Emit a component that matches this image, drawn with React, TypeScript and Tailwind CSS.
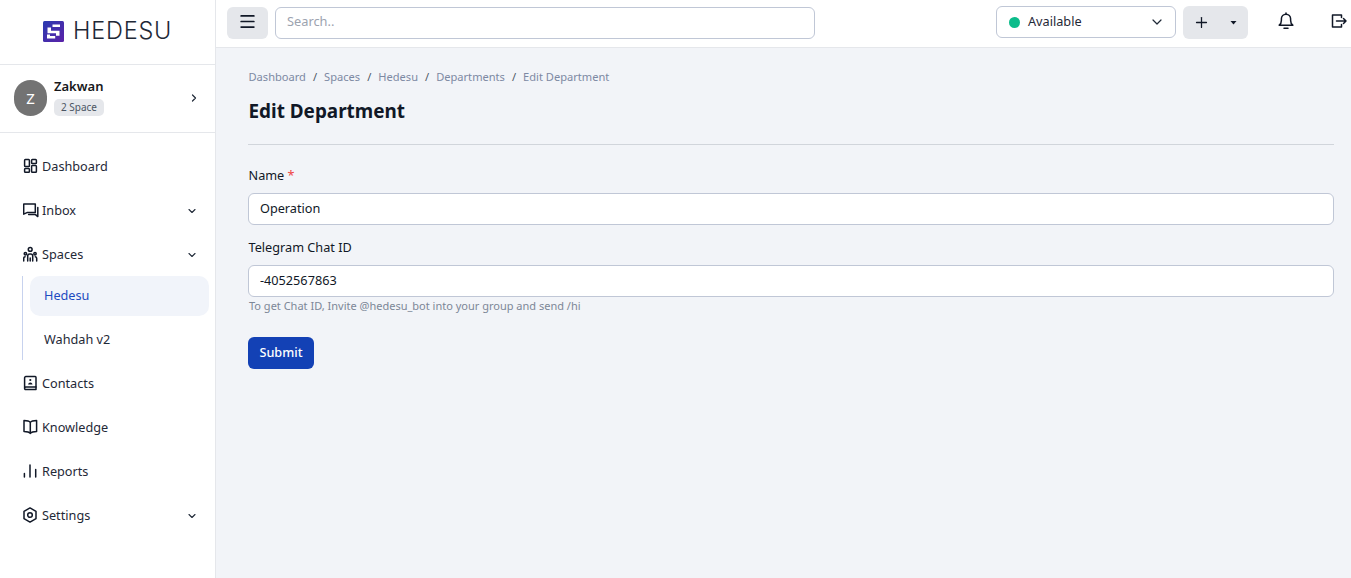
import { ChevronDown, ChevronRight, Plus, Menu } from "lucide-react";
import { ReactNode } from "react";

function Icon({ children }: { children: ReactNode }) {
  return (
    <svg width="16" height="16" viewBox="0 0 16 16" fill="none" stroke="#111827" strokeWidth="1.5" strokeLinecap="round" strokeLinejoin="round" className="mb-[2px] shrink-0">
      {children}
    </svg>
  );
}

function NavItem({ icon, label, caret }: { icon: ReactNode; label: string; caret?: boolean }) {
  return (
    <div className="flex h-11 items-center gap-[3px] pr-[17.5px] pl-[23px] text-[12.7px] text-[#1f2937]">
      {icon}
      <span className="flex-1">{label}</span>
      {caret && <ChevronDown size={12} strokeWidth={2.2} className="text-[#1f2937]" />}
    </div>
  );
}

function Crumb({ label, last }: { label: string; last?: boolean }) {
  return (
    <>
      <span>{label}</span>
      {!last && <span className="text-[#4b5563]">/</span>}
    </>
  );
}

export default function App() {
  return (
    <div className="flex h-[578px] w-[1351px] overflow-hidden bg-[#f2f4f8] font-['Noto_Sans',sans-serif] text-[#111827]">
      <aside className="flex w-[216px] shrink-0 flex-col border-r border-[#e5e7eb] bg-white">
        <div className="flex h-[65px] items-center gap-[9px] border-b border-[#e5e7eb] pb-[2px] pl-[43px]">
          <svg width="21" height="21" viewBox="0 0 21 21">
            <defs>
              <linearGradient id="logo" x1="0" y1="0" x2="1" y2="1">
                <stop offset="0" stopColor="#2a3bb0" />
                <stop offset="1" stopColor="#5b21a8" />
              </linearGradient>
            </defs>
            <rect width="21" height="21" rx="1.5" fill="url(#logo)" />
            <path d="M9.5 3.5H17v2.6H9.5zM4.5 6.5H8v3.2h8.5v5H13v-2.4H4.5zM4 13.6h3v1.4h5.2v2.5H4z" fill="#fff" />
          </svg>
          <span className="font-['Inter',sans-serif] text-[23.5px] leading-none font-light tracking-[0.8px] text-[#1f2937]">HEDESU</span>
        </div>
        <div className="flex h-[68px] items-center border-b border-[#e5e7eb] pr-[15px] pb-px pl-[14px]">
          <div className="flex h-9 w-[33px] items-center justify-center rounded-full bg-[#737373] text-[15px] text-white">Z</div>
          <div className="mb-[3px] ml-[7px] flex flex-1 flex-col items-start">
            <span className="text-[13px] leading-[18px] font-semibold text-[#18181b]">Zakwan</span>
            <span className="mt-[4px] rounded-[5px] bg-[#e5e7eb] px-[7px] text-[10px] leading-[17px] text-[#4b5563]">2 Space</span>
          </div>
          <ChevronRight size={12} strokeWidth={2.4} className="mb-px text-[#1f2937]" />
        </div>
        <nav className="flex flex-col pt-[12px]">
          <NavItem
            label="Dashboard"
            icon={
              <Icon>
                <rect x="1.6" y="1.6" width="4.8" height="7" rx="0.8" />
                <rect x="8.6" y="1.6" width="4.8" height="4" rx="0.8" />
                <rect x="1.6" y="10.6" width="4.8" height="3.6" rx="0.8" />
                <rect x="8.6" y="7.6" width="4.8" height="6.6" rx="0.8" />
              </Icon>
            }
          />
          <NavItem
            label="Inbox"
            caret
            icon={
              <Icon>
                <path d="M.7 2h11.6v8.6H4L.7 12.2z" />
                <path d="M14.8 5.6v9l-2.3-2H5.6" />
              </Icon>
            }
          />
          <NavItem
            label="Spaces"
            caret
            icon={
              <Icon>
                <circle cx="7.2" cy="3.4" r="1.9" />
                <circle cx="2.4" cy="7.8" r="1.2" />
                <circle cx="12" cy="7.8" r="1.2" />
                <path d="M4.7 15v-5a2 2 0 0 1 2-2h1a2 2 0 0 1 2 2v5" />
                <path d="M.7 15v-2.6a1.6 1.6 0 0 1 1.4-1.6M13.7 15v-2.6a1.6 1.6 0 0 0-1.4-1.6M7.2 12v3" />
              </Icon>
            }
          />
          <div className="mb-[2px] -mt-px ml-[22px] flex flex-col border-l border-[#c7d2ee] pr-[6px] pl-[7px]">
            <div className="flex h-10 items-center rounded-[10px] bg-[#f1f4fa] pl-[14px] text-[12.7px] text-[#1e4bc0]">Hedesu</div>
            <div className="mt-1 flex h-10 items-center pl-[14px] text-[12.7px] text-[#1f2937]">Wahdah v2</div>
          </div>
          <NavItem
            label="Contacts"
            icon={
              <Icon>
                <path d="M2.8 1.6h9.4a.8.8 0 0 1 .8.8v9.6H2.8a1.3 1.3 0 0 0-1.2 1.3V2.8a1.2 1.2 0 0 1 1.2-1.2z" />
                <path d="M1.6 13.4a1 1 0 0 0 1 1H13V12" />
                <circle cx="7.3" cy="5" r="1.1" fill="#111827" stroke="none" />
                <path d="M5.1 9.4c.2-1.3 1-2 2.2-2s2 .7 2.2 2z" fill="#111827" stroke="none" />
              </Icon>
            }
          />
          <NavItem
            label="Knowledge"
            icon={
              <Icon>
                <path d="M7.3 3.4C6.3 2.2 4.8 1.6 1 1.6v10.8c3.6 0 5.3.6 6.3 2 1-1.4 2.7-2 6.3-2V1.6C9.8 1.6 8.3 2.2 7.3 3.4zM7.3 3.4v11" />
              </Icon>
            }
          />
          <NavItem
            label="Reports"
            icon={
              <Icon>
                <path d="M1.4 14v-3.4M7 14V2M12.7 14V6.4" />
              </Icon>
            }
          />
          <NavItem
            label="Settings"
            caret
            icon={
              <Icon>
                <path d="M7 .9l6 3.5v7.2l-6 3.5-6-3.5V4.4z" />
                <circle cx="7" cy="8" r="2.3" />
              </Icon>
            }
          />
        </nav>
      </aside>

      <div className="flex min-w-0 flex-1 flex-col">
        <header className="flex h-[48px] items-center border-b border-[#e5e7eb] bg-white pb-px pl-[11px]">
          <button className="flex h-[32px] w-[41px] items-center justify-center rounded-md bg-[#e5e7eb] text-[#111827]">
            <Menu size={19} strokeWidth={2.2} className="mb-[3px]" />
          </button>
          <div className="ml-[7px] flex h-[32px] w-[540px] items-center rounded-md border border-[#c0c7d6] bg-white pb-[2px] pl-[11px] text-[12.8px] text-[#9ca3af]">Search..</div>
          <div className="mb-[2px] ml-[181px] flex h-[32px] w-[180px] items-center rounded-md border border-[#c0c7d6] bg-white pr-[10px] pl-[12px] text-[12.7px] text-[#1f2937]">
            <span className="h-[11px] w-[11px] rounded-full bg-[#0cbc8b]" />
            <span className="ml-[8px] flex-1">Available</span>
            <ChevronDown size={16} strokeWidth={1.8} className="text-[#1f2937]" />
          </div>
          <div className="mb-px ml-[7px] flex h-[33px] w-[65px] items-center rounded-md bg-[#e5e7eb] pl-[10px] text-[#111827]">
            <Plus size={17} strokeWidth={1.8} />
            <svg width="7" height="4" viewBox="0 0 7 4" className="ml-[20px]">
              <path d="M0.5 0h6L3.5 3.6z" fill="#111827" />
            </svg>
          </div>
          <svg width="18" height="18" viewBox="0 0 18 18" fill="none" stroke="#111827" strokeWidth="1.5" strokeLinecap="round" strokeLinejoin="round" className="mb-[4px] ml-[29px] shrink-0">
            <path d="M2.2 13.2c1.4-1 2.2-2.4 2.2-5V6.8a4.6 4.6 0 0 1 9.2 0v1.4c0 2.6.8 4 2.2 5z" />
            <path d="M7 16.2h4M9 1v1" />
          </svg>
          <svg width="16" height="16" viewBox="0 0 16 16" fill="none" stroke="#111827" strokeWidth="1.5" strokeLinecap="round" strokeLinejoin="round" className="mb-[4px] ml-[36px] shrink-0">
            <path d="M10.5 4.5V2h-9v12h9v-2.5M5.5 8H15M12.5 5.5L15 8l-2.5 2.5" />
          </svg>
        </header>

        <main className="flex-1 pt-[21px] pr-[17px] pl-[32px]">
          <div className="ml-[0.5px] flex items-center gap-[7px] text-[11.1px] leading-[16px] text-[#7d89a3]">
            <Crumb label="Dashboard" />
            <Crumb label="Spaces" />
            <Crumb label="Hedesu" />
            <Crumb label="Departments" />
            <Crumb label="Edit Department" last />
          </div>
          <h1 className="mt-[12px] ml-[0.5px] text-[18.9px] leading-[28px] font-bold text-[#111827]">Edit Department</h1>
          <div className="mt-[19px] border-t border-[#d1d5db]" />
          <label className="mt-[21px] ml-[0.5px] block text-[12.7px] leading-[18px] text-[#111827]">
            Name <span className="text-[#ef4444]">*</span>
          </label>
          <input readOnly value="Operation" className="mt-[9px] block h-[32px] w-full rounded-md border border-[#c0c7d6] bg-white px-[11px] pb-[3px] text-[12.7px] text-[#111827] outline-none" />
          <label className="mt-[13px] ml-[0.5px] block text-[12.7px] leading-[18px] text-[#111827]">Telegram Chat ID</label>
          <input readOnly value="-4052567863" className="mt-[9px] block h-[32px] w-full rounded-md border border-[#c0c7d6] bg-white px-[11px] pb-[2px] text-[12.7px] text-[#111827] outline-none" />
          <p className="mt-px ml-px text-[11px] leading-[16px] text-[#7d8797]">To get Chat ID, Invite @hedesu_bot into your group and send /hi</p>
          <button className="mt-[23px] h-[32px] w-[66px] rounded-md bg-[#1341b5] text-[12.7px] font-medium text-white">Submit</button>
        </main>
      </div>
    </div>
  );
}
